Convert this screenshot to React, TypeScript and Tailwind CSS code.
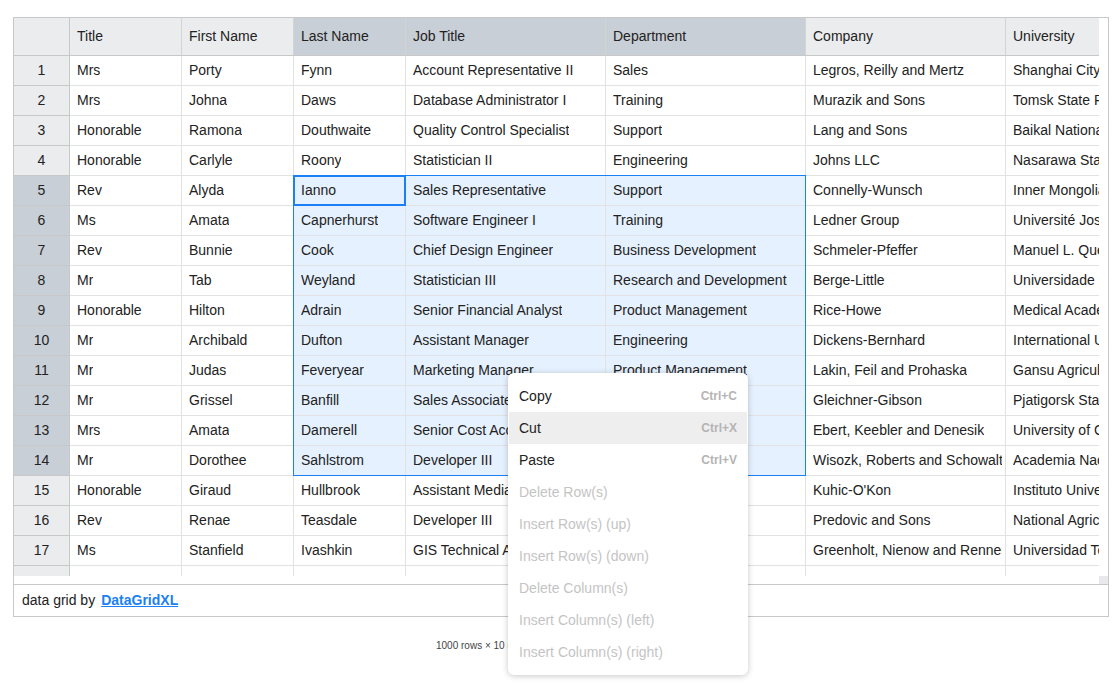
import React from "react";

const columns = [
  { name: "Title", w: "w-[112px]" },
  { name: "First Name", w: "w-[112px]" },
  { name: "Last Name", w: "w-[112px]" },
  { name: "Job Title", w: "w-[200px]" },
  { name: "Department", w: "w-[200px]" },
  { name: "Company", w: "w-[200px]" },
  { name: "University", w: "w-[200px]" },
];

const rows: string[][] = [
  ["Mrs", "Porty", "Fynn", "Account Representative II", "Sales", "Legros, Reilly and Mertz", "Shanghai City Institute"],
  ["Mrs", "Johna", "Daws", "Database Administrator I", "Training", "Murazik and Sons", "Tomsk State Pedagogical University"],
  ["Honorable", "Ramona", "Douthwaite", "Quality Control Specialist", "Support", "Lang and Sons", "Baikal National University"],
  ["Honorable", "Carlyle", "Roony", "Statistician II", "Engineering", "Johns LLC", "Nasarawa State University"],
  ["Rev", "Alyda", "Ianno", "Sales Representative", "Support", "Connelly-Wunsch", "Inner Mongolia University"],
  ["Ms", "Amata", "Capnerhurst", "Software Engineer I", "Training", "Ledner Group", "Université Joseph Fourier"],
  ["Rev", "Bunnie", "Cook", "Chief Design Engineer", "Business Development", "Schmeler-Pfeffer", "Manuel L. Quezon University"],
  ["Mr", "Tab", "Weyland", "Statistician III", "Research and Development", "Berge-Little", "Universidade Federal"],
  ["Honorable", "Hilton", "Adrain", "Senior Financial Analyst", "Product Management", "Rice-Howe", "Medical Academy of Lublin"],
  ["Mr", "Archibald", "Dufton", "Assistant Manager", "Engineering", "Dickens-Bernhard", "International University"],
  ["Mr", "Judas", "Feveryear", "Marketing Manager", "Product Management", "Lakin, Feil and Prohaska", "Gansu Agricultural University"],
  ["Mr", "Grissel", "Banfill", "Sales Associate", "Marketing", "Gleichner-Gibson", "Pjatigorsk State Linguistic University"],
  ["Mrs", "Amata", "Damerell", "Senior Cost Accountant", "Services", "Ebert, Keebler and Denesik", "University of Guelph"],
  ["Mr", "Dorothee", "Sahlstrom", "Developer III", "Product Management", "Wisozk, Roberts and Schowalter", "Academia Nacional de Musica"],
  ["Honorable", "Giraud", "Hullbrook", "Assistant Media Planner", "Legal", "Kuhic-O'Kon", "Instituto Universitario"],
  ["Rev", "Renae", "Teasdale", "Developer III", "Product Management", "Predovic and Sons", "National Agricultural University"],
  ["Ms", "Stanfield", "Ivashkin", "GIS Technical Architect", "Accounting", "Greenholt, Nienow and Renner", "Universidad Tecnologica"],
  ["", "", "", "", "", "", ""],
];

const menu = [
  { label: "Copy", key: "Ctrl+C" },
  { label: "Cut", key: "Ctrl+X", hover: true },
  { label: "Paste", key: "Ctrl+V" },
  { label: "Delete Row(s)", off: true },
  { label: "Insert Row(s) (up)", off: true },
  { label: "Insert Row(s) (down)", off: true },
  { label: "Delete Column(s)", off: true },
  { label: "Insert Column(s) (left)", off: true },
  { label: "Insert Column(s) (right)", off: true },
];

function isSel(r: number, c: number) {
  return r >= 4 && r <= 13 && c >= 2 && c <= 4;
}

export default function App() {
  return (
    <div className="relative w-[1120px] h-[694px] bg-white pt-[17px] pl-[13px] text-[14px] text-[#222] font-['Liberation_Sans',Arial,sans-serif]">
      <div className="w-[1096px] border border-[#c8c8c8] flex flex-col">
        <div className="flex">
          <div className="relative w-[1085px] h-[558px] overflow-hidden">
            {/* header */}
            <div className="flex h-[38px] border-b border-[#c8c8c8] bg-[#ebecee] whitespace-nowrap">
              <div className="w-[56px] shrink-0 border-r border-[#c8c8c8]" />
              {columns.map((col, i) => (
                <div
                  key={col.name}
                  className={`${col.w} shrink-0 flex items-center pl-[7px] border-r border-[#d4d4d4] ${
                    i >= 2 && i <= 4 ? "bg-[#c9cfd6]" : ""
                  }`}
                >
                  {col.name}
                </div>
              ))}
            </div>
            {rows.map((row, r) => (
              <div key={r} className="flex h-[30px] whitespace-nowrap">
                <div
                  className={`w-[56px] shrink-0 flex items-center justify-center border-r border-b border-[#c8c8c8] ${
                    r >= 4 && r <= 13 ? "bg-[#c9cfd6]" : "bg-[#ebecee]"
                  }`}
                >
                  {r < 17 ? r + 1 : ""}
                </div>
                {row.map((cell, c) => (
                  <div
                    key={c}
                    className={`${columns[c].w} shrink-0 flex items-center pl-[7px] pr-[3px] overflow-hidden border-r border-b border-[#e2e2e2] ${
                      isSel(r, c) ? "bg-[#e5f1fe]" : "bg-white"
                    }`}
                  >
                    <span className="overflow-hidden">{cell}</span>
                  </div>
                ))}
              </div>
            ))}
            {/* selection */}
            <div className="absolute left-[279px] top-[157px] w-[513px] h-[301px] border border-[#1a80f4] pointer-events-none" />
            <div className="absolute left-[279px] top-[157px] w-[113px] h-[31px] border-2 border-[#1a80f4] pointer-events-none" />
          </div>
          <div className="w-[9px] bg-white" />
        </div>
        <div className="flex h-[8px]">
          <div className="flex-1 bg-white" />
          <div className="w-[9px] bg-[#e8e9eb]" />
        </div>
        <div className="h-[32px] border-t border-[#c8c8c8] flex items-center pl-2">
          data grid by{" "}
          <a href="#" className="ml-[6px] font-bold text-[#1a80f4] underline">
            DataGridXL
          </a>
        </div>
      </div>
      <div className="mt-[21px] pl-[423px] text-[10px] text-[#444]">1000 rows × 10 columns</div>

      {/* context menu */}
      <div className="absolute left-[508px] top-[373px] w-[240px] bg-white rounded-md shadow-[0_1px_6px_rgba(0,0,0,0.22)] py-[7px] px-px">
        {menu.map((m) => (
          <div
            key={m.label}
            className={`h-[32px] flex items-center justify-between pl-[10px] pr-[10px] ${
              m.hover ? "bg-[#eeeeee]" : ""
            } ${m.off ? "text-[#c4c4c4]" : "text-[#222]"}`}
          >
            <span>{m.label}</span>
            {m.key && <span className="text-[12px] font-bold text-[#b4b4b4]">{m.key}</span>}
          </div>
        ))}
      </div>
    </div>
  );
}
